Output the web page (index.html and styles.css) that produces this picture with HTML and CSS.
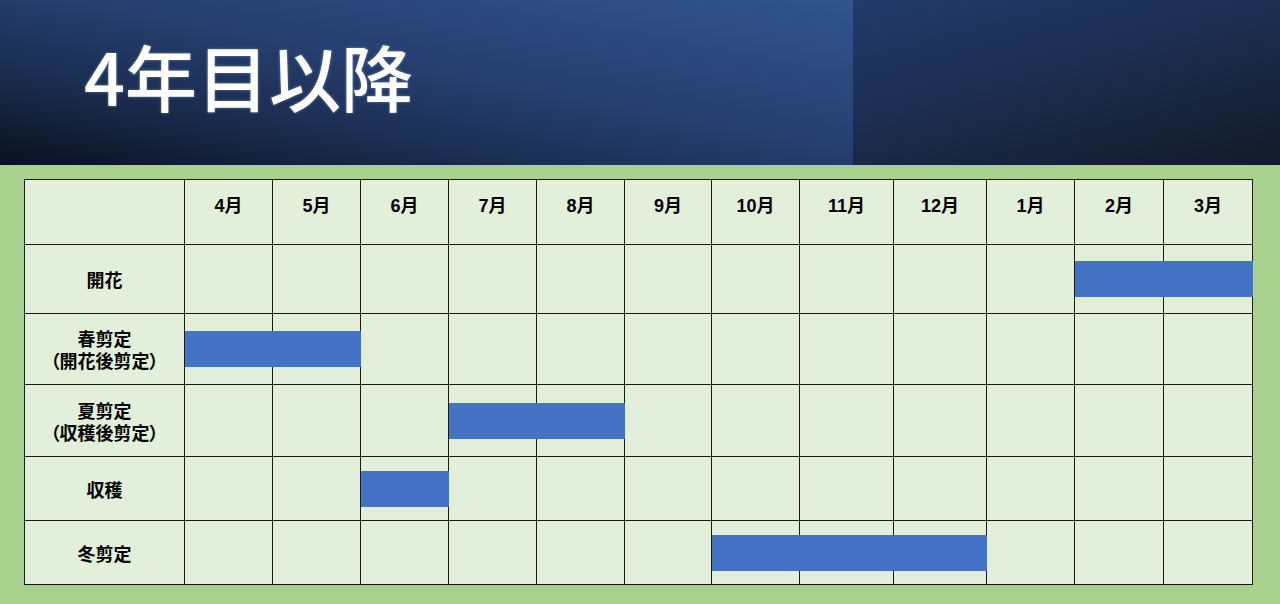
FILE: index.html
```html
<!DOCTYPE html>
<html lang="ja">
<head>
<meta charset="utf-8">
<title>4年目以降</title>
<link rel="stylesheet" href="styles.css">
</head>
<body>
<div class="slide">
  <header class="header">
    <div class="header-main">
      <h1 class="title">4年目以降</h1>
    </div>
    <div class="header-side"></div>
  </header>
  <main class="content">
    <div class="chart">
      <div class="table">
        <div class="cell head"></div>
        <div class="cell head">4月</div>
        <div class="cell head">5月</div>
        <div class="cell head">6月</div>
        <div class="cell head">7月</div>
        <div class="cell head">8月</div>
        <div class="cell head">9月</div>
        <div class="cell head">10月</div>
        <div class="cell head">11月</div>
        <div class="cell head">12月</div>
        <div class="cell head">1月</div>
        <div class="cell head">2月</div>
        <div class="cell head">3月</div>

        <div class="cell label">開花</div>
        <div class="cell"></div><div class="cell"></div><div class="cell"></div><div class="cell"></div><div class="cell"></div><div class="cell"></div><div class="cell"></div><div class="cell"></div><div class="cell"></div><div class="cell"></div><div class="cell"></div><div class="cell"></div>

        <div class="cell label">春剪定<br>（開花後剪定）</div>
        <div class="cell"></div><div class="cell"></div><div class="cell"></div><div class="cell"></div><div class="cell"></div><div class="cell"></div><div class="cell"></div><div class="cell"></div><div class="cell"></div><div class="cell"></div><div class="cell"></div><div class="cell"></div>

        <div class="cell label">夏剪定<br>（収穫後剪定）</div>
        <div class="cell"></div><div class="cell"></div><div class="cell"></div><div class="cell"></div><div class="cell"></div><div class="cell"></div><div class="cell"></div><div class="cell"></div><div class="cell"></div><div class="cell"></div><div class="cell"></div><div class="cell"></div>

        <div class="cell label">収穫</div>
        <div class="cell"></div><div class="cell"></div><div class="cell"></div><div class="cell"></div><div class="cell"></div><div class="cell"></div><div class="cell"></div><div class="cell"></div><div class="cell"></div><div class="cell"></div><div class="cell"></div><div class="cell"></div>

        <div class="cell label">冬剪定</div>
        <div class="cell"></div><div class="cell"></div><div class="cell"></div><div class="cell"></div><div class="cell"></div><div class="cell"></div><div class="cell"></div><div class="cell"></div><div class="cell"></div><div class="cell"></div><div class="cell"></div><div class="cell"></div>
      </div>
      <div class="bars">
        <div class="bar" style="grid-row: 2; grid-column: 12 / 14;"></div>
        <div class="bar" style="grid-row: 3; grid-column: 2 / 4;"></div>
        <div class="bar" style="grid-row: 4; grid-column: 5 / 7;"></div>
        <div class="bar" style="grid-row: 5; grid-column: 4 / 5;"></div>
        <div class="bar" style="grid-row: 6; grid-column: 8 / 11;"></div>
      </div>
    </div>
  </main>
</div>
</body>
</html>
```

FILE: styles.css
```css
* {
  box-sizing: border-box;
}

html, body {
  margin: 0;
  padding: 0;
}

body {
  width: 1280px;
  height: 604px;
  overflow: hidden;
  background: #a9d18e;
  font-family: "Liberation Sans", "Noto Sans CJK JP", sans-serif;
}

.slide {
  display: flex;
  flex-direction: column;
  width: 1280px;
  height: 604px;
}

.header {
  display: flex;
  height: 165px;
  flex: 0 0 auto;
}

.header-main {
  width: 853px;
  padding: 39px 0 0 84px;
  background: linear-gradient(to top right, #0a111e 0%, #1b2e52 30%, #263f70 55%, #31558e 100%);
}

.header-side {
  flex: 1;
  background: linear-gradient(165deg, #233a6a 0%, #1c2d50 45%, #121a27 100%);
}

.title {
  margin: 0;
  font-family: "Noto Sans CJK JP", sans-serif;
  font-size: 72px;
  line-height: 1;
  font-weight: 500;
  color: #ffffff;
  letter-spacing: 0;
  text-shadow: 0 0 3px rgba(160, 190, 240, 0.55);
}

.content {
  flex: 1;
  padding: 14px 27px 19px 24px;
  background: #a9d18e;
}

.chart {
  display: grid;
}

.chart > .table,
.chart > .bars {
  grid-area: 1 / 1;
}

.table,
.bars {
  display: grid;
  grid-template-columns: 159px 87px 87px 87px 87px 87px 86px 87px 93px 92px 87px 88px 88px;
  grid-template-rows: 64px 68px 70px 71px 63px 63px;
  gap: 1px;
  border: 1px solid #1a1a1a;
}

.table {
  background: #1a1a1a;
}

.bars {
  border-color: transparent;
  z-index: 1;
}

.cell {
  background: #e2efda;
  display: flex;
  align-items: center;
  justify-content: center;
  text-align: center;
  font-family: "Liberation Sans", "Noto Sans CJK JP", sans-serif;
  font-weight: 700;
  font-size: 18px;
  line-height: 22px;
  color: #000;
}

.head {
  padding-bottom: 13px;
}

.label {
  font-family: "Noto Sans CJK JP", sans-serif;
  font-feature-settings: "palt";
  font-size: 18px;
  line-height: 22px;
}

.bar {
  align-self: center;
  height: 36px;
  margin-right: -1px;
  background: #4472c4;
}
```
